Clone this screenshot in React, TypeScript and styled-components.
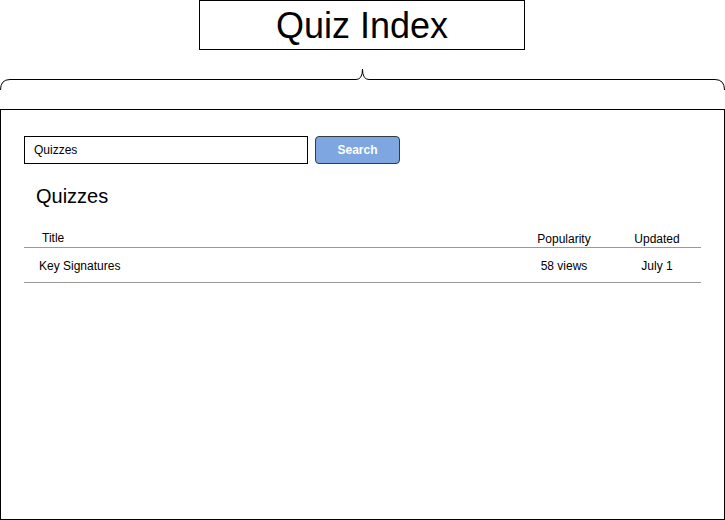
import React from "react";
import styled, { createGlobalStyle } from "styled-components";

const Global = createGlobalStyle`
  html, body { margin: 0; padding: 0; background: #fff; }
  body { font-family: "Liberation Sans", Arial, Helvetica, sans-serif; color: #000; }
  * { box-sizing: border-box; }
`;

const Page = styled.div`
  width: 725px;
  height: 520px;
  display: flex;
  flex-direction: column;
  align-items: center;
`;

const TitleBox = styled.div`
  width: 326px;
  height: 50px;
  margin-left: -1px;
  border: 1px solid #000;
  display: flex;
  align-items: center;
  justify-content: center;
  font-size: 36px;
  line-height: 40px;
  padding-top: 2px;
`;

const Brace = styled.svg`
  display: block;
  width: 725px;
  height: 59px;
  flex: none;
`;

const MainBox = styled.div`
  width: 725px;
  height: 411px;
  border: 1px solid #000;
  padding: 26px 23px 0 23px;
  display: flex;
  flex-direction: column;
`;

const SearchRow = styled.div`
  display: flex;
  gap: 7px;
  height: 28px;
`;

const SearchInput = styled.div`
  width: 284px;
  height: 28px;
  border: 1px solid #000;
  padding-left: 9px;
  display: flex;
  align-items: center;
  font-size: 12px;
`;

const SearchButton = styled.div`
  width: 85px;
  height: 28px;
  border: 1px solid #36393d;
  border-radius: 4px;
  background: #7ea6e0;
  color: #fff;
  font-weight: bold;
  font-size: 12px;
  display: flex;
  align-items: center;
  justify-content: center;
`;

const Heading = styled.div`
  margin: 21px 0 0 12px;
  font-size: 20px;
  line-height: 23px;
`;

const Table = styled.div`
  margin-top: 24px;
  width: 677px;
  display: flex;
  flex-direction: column;
`;

const Row = styled.div<{ $header?: boolean }>`
  display: grid;
  grid-template-columns: 1fr 98px 88px;
  align-items: ${(p) => (p.$header ? "end" : "center")};
  height: ${(p) => (p.$header ? "16px" : "35px")};
  padding-top: ${(p) => (p.$header ? "0" : "2px")};
  padding-bottom: ${(p) => (p.$header ? "2px" : "0")};
  border-bottom: 1px solid #999;
  font-size: 12px;
  line-height: 14px;
`;

const Cell = styled.div<{ $center?: boolean; $indent?: number; $lift?: number }>`
  text-align: ${(p) => (p.$center ? "center" : "left")};
  padding-left: ${(p) => p.$indent ?? 0}px;
  position: relative;
  top: ${(p) => -(p.$lift ?? 0)}px;
`;

export default function App() {
  return (
    <>
      <Global />
      <Page>
        <TitleBox>Quiz Index</TitleBox>
        <Brace viewBox="0 0 725 59">
          <path
            d="M0.5 40 Q0.5 29.5 10 29.5 H356 Q362.5 29.5 362.5 19 Q362.5 29.5 369 29.5 H715 Q724.5 29.5 724.5 40"
            fill="none"
            stroke="#000"
            strokeWidth="1"
          />
        </Brace>
        <MainBox>
          <SearchRow>
            <SearchInput>Quizzes</SearchInput>
            <SearchButton>Search</SearchButton>
          </SearchRow>
          <Heading>Quizzes</Heading>
          <Table>
            <Row $header>
              <Cell $indent={18} $lift={1}>Title</Cell>
              <Cell $center>Popularity</Cell>
              <Cell $center>Updated</Cell>
            </Row>
            <Row>
              <Cell $indent={15}>Key Signatures</Cell>
              <Cell $center>58 views</Cell>
              <Cell $center>July 1</Cell>
            </Row>
          </Table>
        </MainBox>
      </Page>
    </>
  );
}
